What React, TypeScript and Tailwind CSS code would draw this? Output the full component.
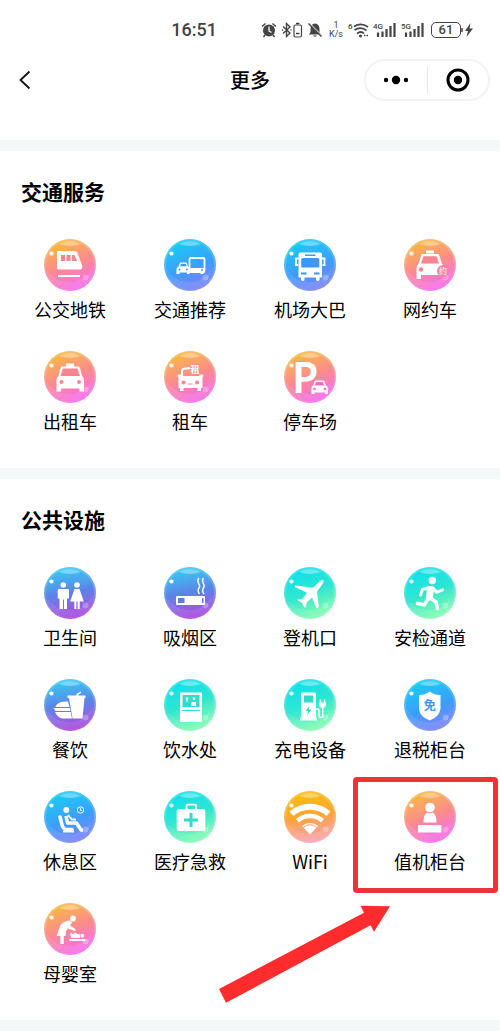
import type { ReactNode } from 'react';

type Tone = 'pink' | 'blue' | 'violet' | 'green' | 'orange';

interface Service {
  label: string;
  tone: Tone;
  glyph: ReactNode;
  highlighted?: boolean;
}

const tones: Record<Tone, { fill: string; ink: string }> = {
  pink: { fill: 'bg-linear-160 from-[#f9b82f] from-10% via-[#fb8a8c] via-50% to-[#f562f2] to-90%', ink: '#f9838f' },
  blue: { fill: 'bg-linear-160 from-[#08cdf6] from-10% via-[#3b9dfa] via-55% to-[#7d78f6] to-95%', ink: '#3d97f3' },
  violet: { fill: 'bg-linear-170 from-[#30c6f2] from-10% via-[#5a82e8] via-50% to-[#a840dc] to-90%', ink: '#5c7ae2' },
  green: { fill: 'bg-linear-160 from-[#08e0ec] from-10% via-[#2ee6d0] via-50% to-[#84fdac] to-90%', ink: '#30dccb' },
  orange: { fill: 'bg-linear-170 from-[#fabb0a] from-10% via-[#fba433] via-50% to-[#fb9fac] to-90%', ink: '#fba143' },
};

const transport: Service[] = [
  {
    label: '公交地铁',
    tone: 'pink',
    glyph: (
      <>
        <path d="M14 12H31Q32.500 12 33.200 13.500L38 26Q39 30.500 36 30.500H14Q13 30.500 13 29V13Q13 12 14 12Z" fill="#fff" />
        <path d="M17 16h4v6h-4zM22.5 16h4v6h-4zM28 16h2.5l2.5 6h-5z" fill={tones.pink.ink} />
        <path d="M14 37H36" stroke="#fff" strokeWidth="2" />
      </>
    ),
  },
  {
    label: '交通推荐',
    tone: 'blue',
    glyph: (
      <>
        <rect x="25.5" y="19" width="15" height="14" rx="1.5" fill="none" stroke="#fff" strokeWidth="1.8" />
        <path d="M25 29h16v4.5h-1.5v1.5h-3v-1.5H25z" fill="#fff" />
        <circle cx="38" cy="31" r="0.9" fill={tones.blue.ink} />
        <path d="M14.5 27.5 16 23.5H22.5L24 27.5Q25.5 28 25.5 30V35H23V33.5H15.5V35H12.5V30Q12.5 28 14.5 27.5Z" fill="#fff" />
        <path d="M16 27.2 17 24.8H21.8L22.6 27.2Z" fill={tones.blue.ink} />
        <circle cx="15.5" cy="30.5" r="1" fill={tones.blue.ink} />
        <circle cx="22.8" cy="30.5" r="1" fill={tones.blue.ink} />
      </>
    ),
  },
  {
    label: '机场大巴',
    tone: 'blue',
    glyph: (
      <>
        <path d="M16 13.5H36Q38 13.5 38 15.5V38.5H35.5V41Q34 43 32 41V38.5H20.5V41Q19 43 17 41V38.5H14.5V15.5Q14.5 13.5 16 13.5Z" fill="#fff" />
        <path d="M14.5 19.5H12V26H14M38 19.5H40.5V26H38.5" fill="none" stroke="#fff" strokeWidth="1.8" />
        <path d="M19 19H34Q35.3 19 35.3 20.5V28.5H17.2V20.5Q17.2 19 19 19ZM21 15.5H31.5V17H21ZM17 33.5H22.5V35.5H17ZM30 33.5H35.5V35.5H30Z" fill={tones.blue.ink} />
      </>
    ),
  },
  {
    label: '网约车',
    tone: 'pink',
    glyph: (
      <>
        <path d="M22 11.5H30V14.5H22ZM18.5 15H33.5Q34.8 15 35.5 17L38 25Q40.5 26 40.5 30V37H36.5V36H17V40H12.5V29Q12.5 26 14.5 25L17 17Q17.5 15 18.5 15Z" fill="#fff" />
        <path d="M19.5 17.2H32.5L35 24.5H17Z" fill={tones.pink.ink} />
        <circle cx="17" cy="30.5" r="2.2" fill={tones.pink.ink} />
        <circle cx="39" cy="32" r="6" fill="#f783a6" />
        <text x="39" y="35" textAnchor="middle" fontSize="8" fill="#fff">约</text>
      </>
    ),
  },
  {
    label: '出租车',
    tone: 'pink',
    glyph: (
      <>
        <path d="M22 12.5H30V15.5H22ZM18 15.5H34.5Q35.5 15.5 36 17L38 25Q40 26.5 40 29V40.5H35.5V37.5H17V40.5H12.5V29Q12.5 26.5 14.5 25L16.5 17Q17 15.5 18 15.5Z" fill="#fff" />
        <path d="M19 17.5H33.5L36 25H16.5Z" fill={tones.pink.ink} />
        <circle cx="17.5" cy="31" r="2" fill={tones.pink.ink} />
        <circle cx="35" cy="31" r="2" fill={tones.pink.ink} />
      </>
    ),
  },
  {
    label: '租车',
    tone: 'pink',
    glyph: (
      <>
        <path d="M18 25V20Q18 18 20 17.7L26 17" fill="none" stroke="#fff" strokeWidth="2" />
        <path d="M14 23.5H17L18 25H35L36 23.5H39Q40 25 38.5 26.5V37H37V40H33.5V37H19.5V40H16V37H14.5V26.5Q12.5 25 14 23.5Z" fill="#fff" />
        <circle cx="19.5" cy="31.5" r="2" fill={tones.pink.ink} />
        <circle cx="33" cy="31.5" r="2" fill={tones.pink.ink} />
        <path d="M24 33h4.5" stroke={tones.pink.ink} />
        <text x="31" y="21.5" textAnchor="middle" fontSize="9" fontWeight="700" fill="#fff">租</text>
      </>
    ),
  },
  {
    label: '停车场',
    tone: 'pink',
    glyph: (
      <>
        <text x="8" y="42" fontSize="43" fontWeight="600" fill="#fff" fontFamily="Noto Sans, sans-serif">P</text>
        <path d="M31 29.5H40L42 34.5Q44 35 44 37.5V43H41V41.5H30.5V43H27.5V37.5Q27.5 35 29 34.5Z" fill="#fff" />
        <path d="M32 31H39L40.3 34.5H30.7Z" fill="#f66fbd" />
        <circle cx="30.5" cy="38" r="1.3" fill="#f66fbd" />
        <circle cx="41" cy="38" r="1.3" fill="#f66fbd" />
      </>
    ),
  },
];

const facilities: Service[] = [
  {
    label: '卫生间',
    tone: 'violet',
    glyph: (
      <g fill="#fff">
        <circle cx="19.3" cy="18" r="2.8" />
        <circle cx="33" cy="18" r="2.8" />
        <path d="M15 22H24Q25 22 25 23V31.5H23V42H20V32.5H19V42H15.5V31.5H13.7V23Q13.7 22 15 22Z" />
        <path d="M30.5 22H35.5L39.8 34.5H35.7V42H33.6V34.5H32.4V42H30.3V34.5H26.2Z" />
      </g>
    ),
  },
  {
    label: '吸烟区',
    tone: 'violet',
    glyph: (
      <>
        <rect x="12" y="29" width="29" height="9" rx="1" fill="#fff" />
        <path d="M14 31H20.5V36H14ZM38 31h1.5v5h-1.5z" fill={tones.violet.ink} />
        <path d="M35 11C31 15 38 18 35 21C33.5 23 34 25 35.5 27M39.5 11C36 15 42.5 18 39.5 21C38 23 38.5 25 40 27" fill="none" stroke="#fff" strokeWidth="1.4" />
      </>
    ),
  },
  {
    label: '登机口',
    tone: 'green',
    glyph: (
      <path
        d="M39.5 13Q37.5 12.3 34.5 15.5L29 20.7 12 18.5Q10 18.7 11.3 20.3L23 25.8 18.5 32 14 31.8Q12.7 33 14 33.8L18 35.8 20 40Q21 41.3 21.8 39.8L23 35.3 28 30.5 32.3 41Q33.5 42.3 34.8 40L33 24.5 37.5 18.5Q40 15 39.5 13Z"
        fill="#fff"
      />
    ),
  },
  {
    label: '安检通道',
    tone: 'green',
    glyph: (
      <g fill="none" stroke="#fff" strokeLinecap="round" strokeLinejoin="round">
        <circle cx="28.3" cy="13.5" r="3.7" fill="#fff" stroke="none" />
        <path d="M26.5 22.5 25.5 30" strokeWidth="7" />
        <path d="M25 20.5 18.5 22.5 16.5 28M29 21 32.5 25.3 38.5 22.8" strokeWidth="3" />
        <path d="M24 31.5 20.5 38 13.5 36.5M27 31.5 32 35 33.5 41.5" strokeWidth="3.5" />
      </g>
    ),
  },
  {
    label: '餐饮',
    tone: 'violet',
    glyph: (
      <>
        <path d="M23.5 16.5H32L33 14.5 37 12.5V14L34.5 15.5 34 16.5H41.5V19H40.5L38.5 39.5H28.5L25 19H23.5Z" fill="#fff" />
        <path d="M11.5 27.5Q14 22 24 22.5L25.5 28H12ZM9.5 29H26L26.5 32H11.5ZM11 33H26.7L28 39.5H18Q13 38 11 33Z" fill="#fff" />
      </>
    ),
  },
  {
    label: '饮水处',
    tone: 'green',
    glyph: (
      <>
        <rect x="16" y="13.5" width="22" height="29.5" rx="1" fill="#fff" />
        <path d="M18.5 16H35.5V28H18.5ZM18 31H36V32H18Z" fill={tones.green.ink} />
        <path d="M21.5 18.5H24.5L24 21H23.5V23H22.5V21H22ZM28.5 18.5H31.5L31 21H29ZM27.5 23H32V27H27.5Z" fill="#fff" />
      </>
    ),
  },
  {
    label: '充电设备',
    tone: 'green',
    glyph: (
      <>
        <path d="M18.5 13.5H30.5Q32 13.5 32 15V39H33V41.5H16V39H17V15Q17 13.5 18.5 13.5Z" fill="#fff" />
        <path d="M20 16.5H29V23.5H20ZM25.5 27 21.5 32H24.2L23.2 36 27.5 30.5H24.8Z" fill={tones.green.ink} />
        <path d="M36.5 20.5V24M40.5 20.5V24M32 30H34Q35 30 35 31V36.5Q35 38.5 37 38.5T38.7 36V28" fill="none" stroke="#fff" strokeWidth="1.5" />
        <path d="M35 23.5H42V25Q42 28.5 38.5 29Q35 28.5 35 25Z" fill="#fff" />
      </>
    ),
  },
  {
    label: '退税柜台',
    tone: 'blue',
    glyph: (
      <>
        <path d="M25.7 12.5Q30 16 36.5 16V30Q35 38 25.7 41.5Q16 38 15 30V16Q21 16 25.7 12.5Z" fill="#fff" />
        <text x="25.7" y="31" textAnchor="middle" fontSize="12" fontWeight="700" fill={tones.blue.ink}>免</text>
      </>
    ),
  },
  {
    label: '休息区',
    tone: 'blue',
    glyph: (
      <>
        <circle cx="22.3" cy="19" r="2.9" fill="#fff" />
        <path d="M16 26 18.5 35.5 21 38.5H28" fill="none" stroke="#fff" strokeWidth="3.5" strokeLinecap="round" strokeLinejoin="round" />
        <path d="M22 25 23.5 32H32.5L37 39H39" fill="none" stroke="#fff" strokeWidth="3.5" strokeLinejoin="round" />
        <path d="M24 24 28 28.5H32" fill="none" stroke="#fff" strokeWidth="1.8" />
        <path d="M19 40.5H30" stroke="#fff" strokeWidth="2" />
        <circle cx="36.5" cy="19" r="3.2" fill="none" stroke="#fff" />
        <path d="M36.5 17V19.5H38" fill="none" stroke="#fff" strokeWidth="0.8" />
      </>
    ),
  },
  {
    label: '医疗急救',
    tone: 'green',
    glyph: (
      <>
        <rect x="12.7" y="18" width="28.6" height="22" rx="2" fill="#fff" />
        <path d="M22.5 18V14.5Q22.5 13.7 23.5 13.7H31Q32 13.7 32 14.5V18" fill="none" stroke="#fff" strokeWidth="1.8" />
        <path d="M27 22V36M20 29H34" stroke={tones.green.ink} strokeWidth="3" />
      </>
    ),
  },
  {
    label: 'WiFi',
    tone: 'orange',
    glyph: (
      <>
        <path d="M7.5 22.8A28 28 0 0 1 44.5 22.8" fill="none" stroke="#fff" strokeWidth="6" />
        <path d="M13.5 29.8A19 19 0 0 1 38.5 29.8" fill="none" stroke="#fff" strokeWidth="4.5" />
        <path d="M18 35A12 12 0 0 1 34 35L26 43.5Z" fill="#fff" />
        <path d="M19.5 36.5A9 9 0 0 1 32.5 36.5" fill="none" stroke="#fb9d6c" />
      </>
    ),
  },
  {
    label: '值机柜台',
    tone: 'pink',
    highlighted: true,
    glyph: (
      <g fill="#fff">
        <circle cx="26" cy="16.5" r="4.8" />
        <path d="M19.5 31.5Q19.5 23 23.5 21.5Q26 23 28.5 21.5Q32.5 23 32.5 31.5Z" />
        <rect x="14" y="34" width="23.5" height="7.5" rx="0.5" />
      </g>
    ),
  },
  {
    label: '母婴室',
    tone: 'pink',
    glyph: (
      <g fill="#fff">
        <circle cx="29" cy="15.5" r="2.9" />
        <path d="M26 17.5Q20 17.5 16.5 22L12.5 33H16.3V41H19.7V33H21.5L22 28L24 25.5L30.5 28Q32 27.5 31.5 26L26 22.5L28 19.5Z" />
        <path d="M25.5 36H41.5V38H25.5ZM27 29.5L29 31.5L31 29.5L33.5 31L36 31.5V35H27.5L26 31Z" />
        <circle cx="38.3" cy="32.7" r="1.9" />
      </g>
    ),
  },
];

function Bubble({ tone, children }: { tone: Tone; children: ReactNode }) {
  return (
    <span className={`block size-[52px] rounded-full ${tones[tone].fill}`}>
      <svg viewBox="0 0 52 52" className="size-full overflow-visible" aria-hidden="true">
        <circle cx="26" cy="26" r="25" fill="none" stroke="#fff" strokeOpacity="0.15" strokeWidth="2" />
        <path d="M15 5Q26 -1 37 5Q26 9 15 5Z" fill="#fff" fillOpacity="0.35" />
        <path d="M3 31Q12 45 29 43Q41 41 48 30Q45 49 26 50Q8 49 3 31Z" fill="#fff" fillOpacity="0.1" />
        <circle cx="7.5" cy="14.5" r="2.1" fill="#fff" />
        <circle cx="41.5" cy="38.5" r="3" fill="#fff" fillOpacity="0.25" />
        {children}
      </svg>
    </span>
  );
}

function ServiceSection({ title, items }: { title: string; items: Service[] }) {
  return (
    <section className="bg-white pt-6 pb-[33px]">
      <h2 className="px-[21px] mb-8 text-[21px] leading-8 font-bold">{title}</h2>
      <div className="grid grid-cols-4 gap-y-7 px-[10px]">
        {items.map((item) => (
          <a key={item.label} href="#" className="relative flex flex-col items-center gap-1">
            <Bubble tone={item.tone}>{item.glyph}</Bubble>
            <span className="text-lg leading-7 whitespace-nowrap">{item.label}</span>
            {item.highlighted && <Callout />}
          </a>
        ))}
      </div>
    </section>
  );
}

// Red frame and arrow pointing at the tile it sits in
function Callout() {
  return (
    <>
      <span className="pointer-events-none absolute -top-[14px] -left-[17px] -right-2 h-[116px] rounded-sm border-5 border-[#f2303a]" />
      <svg viewBox="0 0 172 98" className="pointer-events-none absolute top-[114px] right-[100px] w-[172px] max-w-none" aria-hidden="true">
        <path d="M1 84 146 7.7 142.5 0.7 172 1.3 156 26.7 152.5 20.3 8 97.7Z" fill="#ff2c2e" />
      </svg>
    </>
  );
}

function SignalBars({ label }: { label: string }) {
  return (
    <svg viewBox="0 0 24 18" className="h-[18px] w-6 overflow-visible">
      <text x="0" y="8" fontSize="8" fontWeight="500" fill="#444" fontFamily="Roboto, sans-serif">{label}</text>
      <path d="M5 11.5V16M9.5 10.5V16M13.5 8V16M17.5 5V16M21.5 2V16" stroke="#444" strokeWidth="2.2" />
    </svg>
  );
}

function StatusBar() {
  return (
    <div className="flex h-[58px] items-center justify-end gap-1 pt-[2px] pr-[27px] text-[#444]">
      <span className="mr-10 font-[Roboto,sans-serif] text-lg font-medium">16:51</span>
      <svg viewBox="0 0 16 16" className="size-4" aria-hidden="true">
        <circle cx="8" cy="8.5" r="6" fill="#444" />
        <path d="M1 4.5 4.5 1.5M15 4.5 11.5 1.5M4 13 2.5 15M12 13 13.5 15" stroke="#444" strokeWidth="1.5" />
        <path d="M8 4.5V9L10.5 10.5" fill="none" stroke="#fff" strokeWidth="1.3" />
      </svg>
      <svg viewBox="0 0 22 16" className="h-4 w-[22px]" aria-hidden="true">
        <path d="M2 4.5 9 11 5.5 14.5V1.5L9 5 2 11.5" fill="none" stroke="#444" strokeWidth="1.4" />
        <path d="M1 8h1M9.5 8h1" stroke="#444" strokeWidth="1.5" />
        <rect x="13" y="3" width="7.5" height="12" rx="1.5" fill="none" stroke="#444" strokeWidth="1.2" />
        <path d="M15 1.5h3.5M15 11.5h3.5" stroke="#444" strokeWidth="1.4" />
      </svg>
      <svg viewBox="0 0 16 16" className="size-4" aria-hidden="true">
        <path d="M8 1.5Q12.5 2 12.5 7V10L14 12.5H2L3.5 10V7Q3.5 2 8 1.5ZM6 13.5H10Q8 16 6 13.5Z" fill="#444" />
        <path d="M2.5 1.5 15 14" stroke="#fff" strokeWidth="1.2" />
        <path d="M1.5 1.5 14.5 14.5" stroke="#444" strokeWidth="1.4" />
      </svg>
      <span className="ml-[2px] flex flex-col items-center font-[Roboto,sans-serif] text-[9px] leading-[9px]">
        <span>1</span>
        <span>K/s</span>
      </span>
      <svg viewBox="0 0 22 18" className="h-[18px] w-[22px] overflow-visible">
        <text x="1" y="8" fontSize="8" fontWeight="500" fill="#444" fontFamily="Roboto, sans-serif">6</text>
        <path d="M7 5.5Q14 1 21 6M7.5 9Q14 5 19.5 9.5M10 12.5Q14 9.5 17 12.5" fill="none" stroke="#444" strokeWidth="1.7" />
        <circle cx="13.5" cy="15" r="1.5" fill="#444" />
        <path d="M17 14.5h4" stroke="#444" strokeWidth="1.5" strokeDasharray="1.5 1" />
      </svg>
      <SignalBars label="4G" />
      <SignalBars label="5G" />
      <span className="ml-[2px] flex h-4 w-[30px] items-center justify-center rounded-[5px] border border-[#444] font-[Roboto,sans-serif] text-[13px] font-medium">
        61
      </span>
      <svg viewBox="0 0 12 16" className="-ml-1 h-4 w-3" aria-hidden="true">
        <path d="M1 6V10" stroke="#444" strokeWidth="1.5" />
        <path d="M9.5 1 4 9H7L5.5 15 12 6.5H8.5Z" fill="#444" />
      </svg>
    </div>
  );
}

export default function App() {
  return (
    <div className="bg-[#f5f8f8] pb-[11px] font-['Noto_Sans_CJK_SC',sans-serif] text-black">
      <header className="bg-white pb-[38px]">
        <StatusBar />
        <div className="grid h-11 grid-cols-[1fr_auto_1fr] items-center px-[10px]">
          <button type="button" aria-label="返回" className="ml-2 w-4">
            <svg viewBox="0 0 14 22" className="h-[22px] w-[14px]">
              <path d="M11.5 2.5 2.5 11 11.5 19.5" fill="none" stroke="#111" strokeWidth="1.8" />
            </svg>
          </button>
          <h1 className="text-xl font-medium">更多</h1>
          <div className="ml-auto flex h-[42px] w-[126px] items-center rounded-full border-2 border-[#f3f3f3]">
            <button type="button" aria-label="菜单" className="flex flex-1 justify-center">
              <svg viewBox="0 0 26 10" className="h-[10px] w-[26px]">
                <circle cx="3" cy="5" r="2.2" />
                <circle cx="13" cy="5" r="4.2" />
                <circle cx="23" cy="5" r="2.2" />
              </svg>
            </button>
            <span className="h-[26px] w-px bg-[#e8e8e8]" />
            <button type="button" aria-label="关闭" className="flex flex-1 justify-center">
              <svg viewBox="0 0 24 24" className="size-6">
                <circle cx="12" cy="12" r="10" fill="none" stroke="#000" strokeWidth="3" />
                <circle cx="12" cy="12" r="4.2" />
              </svg>
            </button>
          </div>
        </div>
      </header>
      <main className="flex flex-col gap-[11px] pt-[11px]">
        <ServiceSection title="交通服务" items={transport} />
        <ServiceSection title="公共设施" items={facilities} />
      </main>
    </div>
  );
}
